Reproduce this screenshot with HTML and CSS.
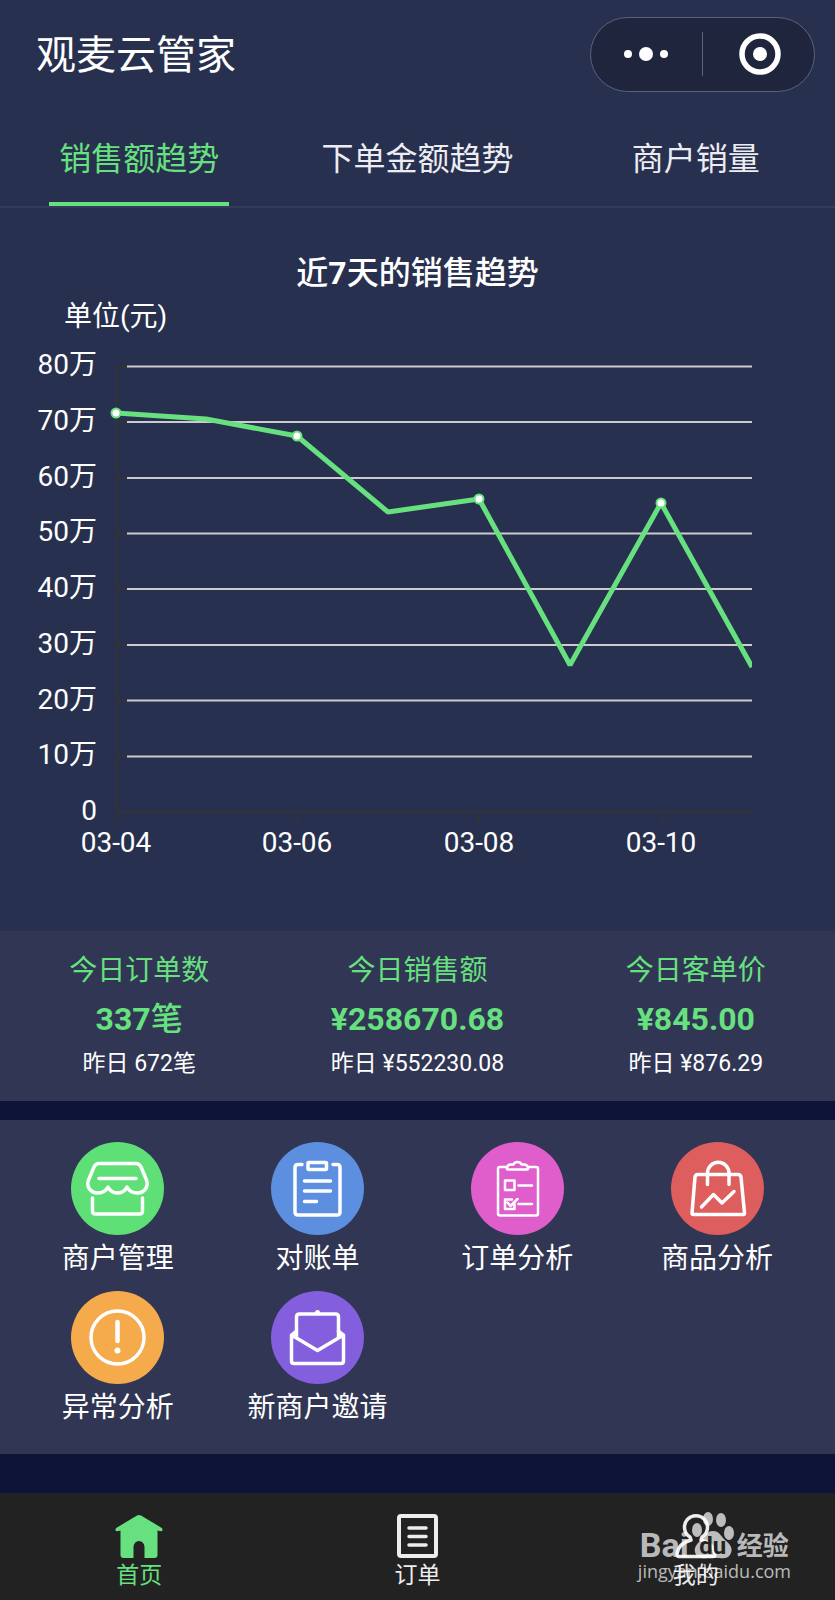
FILE: index.html
```html
<!DOCTYPE html>
<html lang="zh-CN">
<head>
    <meta charset="UTF-8">
    <meta name="viewport" content="width=device-width, initial-scale=1.0">
    <title>观麦云管家</title>
    <link rel="stylesheet" href="styles.css">
</head>
<body>
    <header class="header">
        <h1>观麦云管家</h1>
        <div class="capsule">
            <button type="button" aria-label="更多">
                <svg width="46" height="46" viewBox="0 0 46 46" fill="#fff">
                    <circle cx="4" cy="23" r="4"/>
                    <circle cx="22" cy="23" r="7"/>
                    <circle cx="40" cy="23" r="4"/>
                </svg>
            </button>
            <span class="capsule-line"></span>
            <button type="button" aria-label="关闭">
                <svg width="46" height="46" viewBox="0 0 46 46">
                    <circle cx="24" cy="23" r="18" fill="none" stroke="#fff" stroke-width="5.500"/>
                    <circle cx="24" cy="23" r="7" fill="#fff"/>
                </svg>
            </button>
        </div>
    </header>

    <nav class="tabs">
        <a href="#" class="active">销售额趋势</a>
        <a href="#">下单金额趋势</a>
        <a href="#">商户销量</a>
    </nav>

    <section class="chart">
        <h2>近<b>7</b>天的销售趋势</h2>
        <svg viewBox="0 0 835 639">
            <text class="unit" x="64" y="34">单位(元)</text>

            <!-- grid lines -->
            <path class="grid" d="M127 74.500H752M127 130H752M127 186H752M127 241.500H752M127 297H752M127 353H752M127 408.500H752M127 464.500H752"/>

            <!-- axes and ticks -->
            <path class="axis" d="M117 74V530M116 520H752M117 75h10M117 130h10M117 186h10M117 242h10M117 297h10M117 353h10M117 409h10M117 464h10M298 520v10M479 520v10M662 520v10"/>

            <g class="y-labels">
                <text x="97" y="82">80万</text>
                <text x="97" y="138">70万</text>
                <text x="97" y="194">60万</text>
                <text x="97" y="249">50万</text>
                <text x="97" y="305">40万</text>
                <text x="97" y="361">30万</text>
                <text x="97" y="417">20万</text>
                <text x="97" y="472">10万</text>
                <text x="97" y="528">0</text>
            </g>
            <g class="x-labels">
                <text x="116" y="560">03-04</text>
                <text x="297" y="560">03-06</text>
                <text x="479" y="560">03-08</text>
                <text x="661" y="560">03-10</text>
            </g>

            <clipPath id="plot"><rect x="100" y="60" width="652" height="470"/></clipPath>
            <polyline class="line" clip-path="url(#plot)" points="116,121 206,127 297,144 388,220 479,207 570,373 661,211 752,375"/>
            <g class="dots">
                <circle cx="116" cy="121" r="4.500"/>
                <circle cx="297" cy="144" r="4.500"/>
                <circle cx="479" cy="207" r="4.500"/>
                <circle cx="661" cy="211" r="4.500"/>
            </g>
        </svg>
    </section>

    <section class="stats">
        <div class="stat">
            <p class="stat-label">今日订单数</p>
            <p class="stat-value">337<span>笔</span></p>
            <p class="stat-prev">昨日 672笔</p>
        </div>
        <div class="stat">
            <p class="stat-label">今日销售额</p>
            <p class="stat-value">¥258670.68</p>
            <p class="stat-prev">昨日 ¥552230.08</p>
        </div>
        <div class="stat">
            <p class="stat-label">今日客单价</p>
            <p class="stat-value">¥845.00</p>
            <p class="stat-prev">昨日 ¥876.29</p>
        </div>
    </section>

    <section class="menu">
        <a href="#">
            <svg class="green" viewBox="0 0 93 93">
                <path d="M28 21.500h37q3.500 0 5 3.500l5.500 13c2.500 7-2.500 13-9 13-4.500 0-8.500-2-10.500-6-2 4-5 6-9.500 6s-7.500-2-9.500-6c-2 4-6 6-10.500 6-6.500 0-11.500-6-9-13l5.500-13q1.500-3.500 5-3.500z"/>
                <path d="M28 36.500h37M21.500 56v13q0 3 3 3h44q3 0 3-3V56"/>
            </svg>
            <span>商户管理</span>
        </a>
        <a href="#">
            <svg class="blue" viewBox="0 0 93 93">
                <path d="M31 22.500h-4q-3 0-3 3V70q0 3 3 3h39q3 0 3-3V25.500q0-3-3-3h-4"/>
                <rect x="37" y="20.500" width="18.500" height="7" rx="1"/>
                <path d="M33.500 39h26M33.500 49h26M33.500 59.500h12"/>
            </svg>
            <span>对账单</span>
        </a>
        <a href="#">
            <svg class="pink" viewBox="0 0 93 93">
                <path d="M36 25h-7q-2 0-2 2v44.500q0 2 2 2h36q2 0 2-2V27q0-2-2-2h-7"/>
                <path d="M37 27.500q-1.500 0-1-2 .5-2.500 3.500-3h3q1-2.500 4-2.500t4 2.500h3q3 .5 3.500 3 .5 2-1 2z"/>
                <path d="M34 38.500h9.500V48H34zM47.500 43.500h13.500M47.500 62h13.500"/>
                <path d="M41 57.500h-7V67h9.500v-5M36.500 60.500l3 3.500 7-7"/>
            </svg>
            <span>订单分析</span>
        </a>
        <a href="#">
            <svg class="red" viewBox="0 0 93 93">
                <path d="M27 32.500h40q2.500 0 3 2.500l3.500 36q0 1.500-1.500 1.500H22.500q-1.500 0-1.500-1.500l3-36q.5-2.500 3-2.500z"/>
                <path d="M36.500 42.500V31a10.700 10.700 0 0 1 21.500 0v11.500M30.500 65l12-12.500L51 61l12-11.500"/>
            </svg>
            <span>商品分析</span>
        </a>
        <a href="#">
            <svg class="orange" viewBox="0 0 93 93">
                <circle cx="46.500" cy="46.500" r="26.500"/>
                <path stroke-width="4.500" d="M46.500 31v19"/>
                <circle cx="46.500" cy="59.500" r="3" fill="#fff" stroke="none"/>
            </svg>
            <span>异常分析</span>
        </a>
        <a href="#">
            <svg class="purple" viewBox="0 0 93 93">
                <path d="M25.500 46V26q0-3 3-3h36q3 0 3 3v20"/>
                <path d="M25.500 40l-5 4v26q0 2.500 2.500 2.500h47q2.500 0 2.500-2.500V44l-5-4M20.500 44l26 15.500L72.500 44"/>
                <circle cx="46.500" cy="21.500" r="2.500" fill="#fff" stroke="none"/>
                <path fill="#fff" stroke-width="1" d="M25 40l-5 4 5 3zM68 40l5 4-5 3z"/>
            </svg>
            <span>新商户邀请</span>
        </a>
    </section>

    <footer class="tabbar">
        <a href="#" class="active">
            <svg width="48" height="48" viewBox="0 0 48 48">
                <path fill="currentColor" d="M22 3.500q2-1 4 0L46 15.500q2 1 1.500 3-1 1-3 .5l-2-.5V43q0 3-3 3H29.500V35a5.500 6 0 0 0-11 0v11H8.500q-3 0-3-3V18.500l-2 .5q-2 .5-3-.5-.5-2 1.500-3z"/>
            </svg>
            <span>首页</span>
        </a>
        <a href="#">
            <svg width="48" height="48" viewBox="0 0 48 48" fill="none" stroke="currentColor" stroke-width="4">
                <rect x="6" y="4" width="37" height="40" rx="2"/>
                <path stroke-width="3.500" stroke-linecap="round" d="M16 16h17M16 24.500h17M16 33h17"/>
            </svg>
            <span>订单</span>
        </a>
        <a href="#">
            <svg width="48" height="48" viewBox="0 0 48 48" fill="none" stroke="currentColor" stroke-width="3.500" stroke-linejoin="round">
                <path d="M19 28l-1-3a11.500 11.500 0 1 1 12 0l-1 3c7 2 13 6 14 14q0 2.500-2 2.500H7q-2 0-2-2.500c1-8 7-12 14-14z"/>
            </svg>
            <span>我的</span>
        </a>
        <div class="watermark">
            <div class="watermark-logo">
                <span class="bai">Bai</span>
                <span class="paw">
                    <svg width="44" height="48" viewBox="0 0 44 48" fill="currentColor">
                        <ellipse cx="6" cy="19" rx="5" ry="7"/>
                        <ellipse cx="17" cy="8" rx="5" ry="7"/>
                        <ellipse cx="30" cy="9" rx="5" ry="7"/>
                        <ellipse cx="38" cy="22" rx="5" ry="7"/>
                        <path d="M22 20c6 0 8 5 12 9 5 4 8 8 6 13-2 5-7 6-12 5H16c-6 1-11-1-12-6-1-5 2-8 6-12 4-4 6-9 12-9z"/>
                    </svg>
                    <span class="du">du</span>
                </span>
                <span class="jingyan">经验</span>
            </div>
            <div class="watermark-url">jingyan.baidu.com</div>
        </div>
    </footer>
</body>
</html>
```
FILE: styles.css
```css
* {
    box-sizing: border-box;
}
body {
    margin: 0;
    background-color: #0d1438;
    color: #fff;
    font-family: Roboto, "Noto Sans CJK SC", sans-serif;
}
h1, h2, p {
    margin: 0;
}
a {
    color: inherit;
    text-decoration: none;
}

/* Header */
.header {
    display: flex;
    justify-content: space-between;
    align-items: center;
    height: 108px;
    padding: 0 20px 0 36px;
    background-color: #27304e;
}
.header h1 {
    padding-top: 4px;
    font-size: 40px;
    line-height: 56px;
    font-weight: 400;
}
.capsule {
    display: flex;
    align-items: center;
    width: 225px;
    height: 75px;
    border: 1px solid #5c6278;
    border-radius: 38px;
    background-color: #20253e;
}
.capsule button {
    flex: 1;
    display: flex;
    justify-content: center;
    padding: 0;
    border: none;
    background: none;
    cursor: pointer;
}
.capsule-line {
    width: 1px;
    height: 44px;
    background-color: #5c6278;
}

/* Tabs */
.tabs {
    display: grid;
    grid-template-columns: repeat(3, 1fr);
    justify-items: center;
    height: 100px;
    border-bottom: 2px solid #343c5a;
    background-color: #27304e;
    color: #ececf2;
    font-size: 32px;
    line-height: 102px;
}
.tabs a {
    height: 98px;
    padding: 0 10px;
}
.tabs .active {
    color: #67e07f;
    border-bottom: 4px solid #67e07f;
}

/* Sales chart */
.chart {
    padding-top: 44px;
    background-color: #27304e;
}
.chart h2 {
    font-size: 32px;
    line-height: 42px;
    margin-bottom: -2px;
    font-weight: 500;
    text-align: center;
}
.chart svg {
    display: block;
    width: 100%;
}
.chart text {
    fill: #fff;
    font-size: 28px;
}
.y-labels {
    text-anchor: end;
}
.x-labels {
    text-anchor: middle;
}
.grid {
    stroke: #ccc;
    stroke-width: 2;
}
.axis {
    fill: none;
    stroke: #333;
    stroke-width: 2;
}
.line {
    fill: none;
    stroke: #67e07f;
    stroke-width: 5;
    stroke-linejoin: bevel;
}
.dots {
    fill: #fff;
    stroke: #67e07f;
    stroke-width: 2;
}

/* Today numbers */
.stats {
    display: grid;
    grid-template-columns: repeat(3, 1fr);
    padding: 18px 0;
    background-color: #303653;
    text-align: center;
}
.stat-label {
    color: #67e07f;
    font-size: 28px;
    line-height: 44px;
}
.stat-value {
    color: #67e07f;
    font-size: 32px;
    line-height: 52px;
    font-weight: 700;
}
.stat-value span {
    font-weight: 500;
}
.stat-prev {
    font-size: 23px;
    line-height: 38px;
}

/* Menu */
.menu {
    display: grid;
    grid-template-columns: repeat(4, 1fr);
    row-gap: 8px;
    margin: 19px 0 39px;
    padding: 22px 18px;
    background-color: #303653;
}
.menu a {
    display: flex;
    flex-direction: column;
    align-items: center;
    font-size: 28px;
    line-height: 48px;
}
.menu svg {
    width: 93px;
    height: 93px;
    border-radius: 50%;
    fill: none;
    stroke: #fff;
    stroke-width: 3.5;
    stroke-linecap: round;
    stroke-linejoin: round;
}
.menu .green {
    background-color: #5fe077;
}
.menu .blue {
    background-color: #5c8fdf;
}
.menu .pink {
    background-color: #df5ecc;
    stroke-width: 2.5;
}
.menu .red {
    background-color: #de5d5d;
}
.menu .orange {
    background-color: #f5ab4c;
}
.menu .purple {
    background-color: #835edd;
}

/* Bottom bar */
.tabbar {
    position: relative;
    display: grid;
    grid-template-columns: repeat(3, 1fr);
    height: 107px;
    padding-top: 19px;
    background-color: #222;
    color: #ededed;
}
.tabbar a {
    display: flex;
    flex-direction: column;
    align-items: center;
    font-size: 23px;
    line-height: 32px;
}
.tabbar .active {
    color: #67e07f;
}

/* Watermark over the bar */
.watermark {
    position: absolute;
    right: 44px;
    bottom: 17px;
    color: rgba(255, 255, 255, 0.7);
    pointer-events: none;
}
.watermark-logo {
    display: flex;
    align-items: flex-end;
    gap: 2px;
    height: 48px;
    padding-left: 2px;
    font-weight: 700;
}
.bai {
    font-size: 34px;
    line-height: 28px;
}
.paw {
    display: grid;
    place-items: end center;
}
.paw svg, .du {
    grid-area: 1 / 1;
}
.du {
    color: #222;
    font-size: 24px;
    line-height: 26px;
}
.jingyan {
    font-size: 26px;
    line-height: 26px;
}
.watermark-url {
    font-family: "Open Sans", sans-serif;
    font-size: 18px;
    line-height: 24px;
}
```
